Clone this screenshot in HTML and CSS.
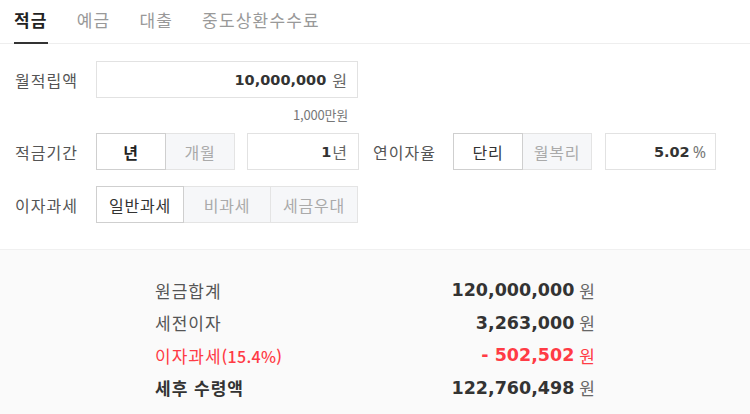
FILE: index.html
```html
<!DOCTYPE html>
<html lang="ko">
<head>
<meta charset="utf-8">
<title>적금 계산기</title>
<link rel="stylesheet" href="styles.css">
</head>
<body>
<nav class="tabs">
  <a class="tab on">적금</a>
  <a class="tab">예금</a>
  <a class="tab">대출</a>
  <a class="tab">중도상환수수료</a>
</nav>

<section class="form">
  <div class="row">
    <span class="label">월적립액</span>
    <div class="input wide"><span class="num">10,000,000</span><span class="unit">원</span></div>
  </div>
  <div class="hint">1,000만원</div>

  <div class="row">
    <span class="label">적금기간</span>
    <div class="seg">
      <span class="seg-btn on strong">년</span>
      <span class="seg-btn">개월</span>
    </div>
    <div class="input mid"><span class="num">1</span><span class="unit tight">년</span></div>
    <span class="label label2">연이자율</span>
    <div class="seg">
      <span class="seg-btn on">단리</span>
      <span class="seg-btn">월복리</span>
    </div>
    <div class="input mid2"><span class="num">5.02</span><span class="unit pct">%</span></div>
  </div>

  <div class="row row3">
    <span class="label">이자과세</span>
    <div class="seg">
      <span class="seg-btn big on">일반과세</span>
      <span class="seg-btn big">비과세</span>
      <span class="seg-btn big">세금우대</span>
    </div>
  </div>
</section>

<section class="result">
  <div class="res-row">
    <span class="res-label">원금합계</span>
    <span class="res-val"><span class="num">120,000,000</span><span class="won">원</span></span>
  </div>
  <div class="res-row">
    <span class="res-label">세전이자</span>
    <span class="res-val"><span class="num">3,263,000</span><span class="won">원</span></span>
  </div>
  <div class="res-row red">
    <span class="res-label">이자과세<span class="pctlabel">(15.4%)</span></span>
    <span class="res-val"><span class="num">- 502,502</span><span class="won">원</span></span>
  </div>
  <div class="res-row total">
    <span class="res-label">세후 수령액</span>
    <span class="res-val"><span class="num">122,760,498</span><span class="won">원</span></span>
  </div>
</section>
</body>
</html>
```

FILE: styles.css
```css
html, body {
  margin: 0;
  padding: 0;
  background: #fff;
}
body {
  font-family: "Noto Sans CJK KR", "Noto Sans", sans-serif;
  color: #333;
  width: 750px;
  height: 414px;
  overflow: hidden;
}

/* tabs */
.tabs {
  display: flex;
  gap: 29px;
  padding-left: 14px;
  border-bottom: 1px solid #eeeeee;
}
.tab {
  font-size: 17px;
  line-height: 24px;
  padding: 8px 0 10px;
  margin-bottom: -1px;
  border-bottom: 2px solid transparent;
  color: #999;
  letter-spacing: 1.2px;
}
.tab.on {
  color: #222;
  font-weight: bold;
  border-bottom-color: #333;
}

/* form */
.form {
  padding: 17px 0 26px 15px;
}
.row {
  display: flex;
  align-items: center;
  height: 37px;
}
.row3 {
  margin-top: 16px;
}
.label {
  width: 81px;
  flex: none;
  font-size: 16px;
  color: #555;
  letter-spacing: 1px;
}
.label2 {
  width: 80px;
  margin-left: 14px;
}
.input {
  box-sizing: border-box;
  height: 37px;
  border: 1px solid #e2e2e2;
  display: flex;
  align-items: center;
  justify-content: flex-end;
  padding-right: 10px;
  background: #fff;
}
.input.wide { width: 262px; }
.input.mid { width: 112px; margin-left: 12px; padding-right: 11px; }
.input.mid2 { width: 111px; margin-left: 13px; padding-right: 9px; }

.num {
  font-family: "DejaVu Sans", "Liberation Sans", sans-serif;
  font-weight: bold;
}
.input .num {
  font-size: 14.5px;
  color: #333;
}
.unit {
  font-size: 16px;
  color: #666;
  margin-left: 6px;
}
.unit.tight { margin-left: 1px; }
.unit.pct {
  font-family: "Noto Sans", sans-serif;
  margin-left: 3px;
  font-size: 16px;
  color: #777;
}

.hint {
  width: 333px;
  text-align: right;
  font-size: 13px;
  line-height: 18px;
  color: #777;
  padding: 8px 0 9px;
  letter-spacing: -0.2px;
}

.seg {
  display: flex;
}
.seg-btn {
  box-sizing: border-box;
  width: 70px;
  height: 37px;
  border: 1px solid #e4e4e4;
  background: #f6f7f9;
  color: #aaa;
  font-size: 16px;
  letter-spacing: 0.8px;
  display: flex;
  align-items: center;
  justify-content: center;
}
.seg-btn + .seg-btn { margin-left: -1px; }
.seg-btn.big { width: 88px; }
.seg-btn.on {
  background: #fff;
  border-color: #cfcfcf;
  color: #333;
  position: relative;
  z-index: 1;
}
.seg-btn.strong { font-weight: bold; color: #222; }

/* result */
.result {
  box-sizing: border-box;
  background: #fafafa;
  border-top: 1px solid #f0f0f0;
  padding: 24px 0 0 155px;
  height: 165px;
}
.res-row {
  width: 440px;
  height: 32.5px;
  display: flex;
  align-items: center;
  justify-content: space-between;
}
.res-label {
  font-size: 17px;
  color: #555;
  letter-spacing: 1px;
}
.res-val {
  display: flex;
  align-items: center;
}
.res-val .num {
  font-size: 17.5px;
  color: #333;
}
.won {
  font-size: 17px;
  color: #666;
  margin-left: 5px;
}
.pctlabel {
  font-size: 16px;
  letter-spacing: 0.3px;
  font-weight: 500;
}
.red .res-label,
.red .res-val .num,
.red .won {
  color: #ff3b45;
}
.total .res-label {
  font-weight: bold;
  color: #333;
}
```
